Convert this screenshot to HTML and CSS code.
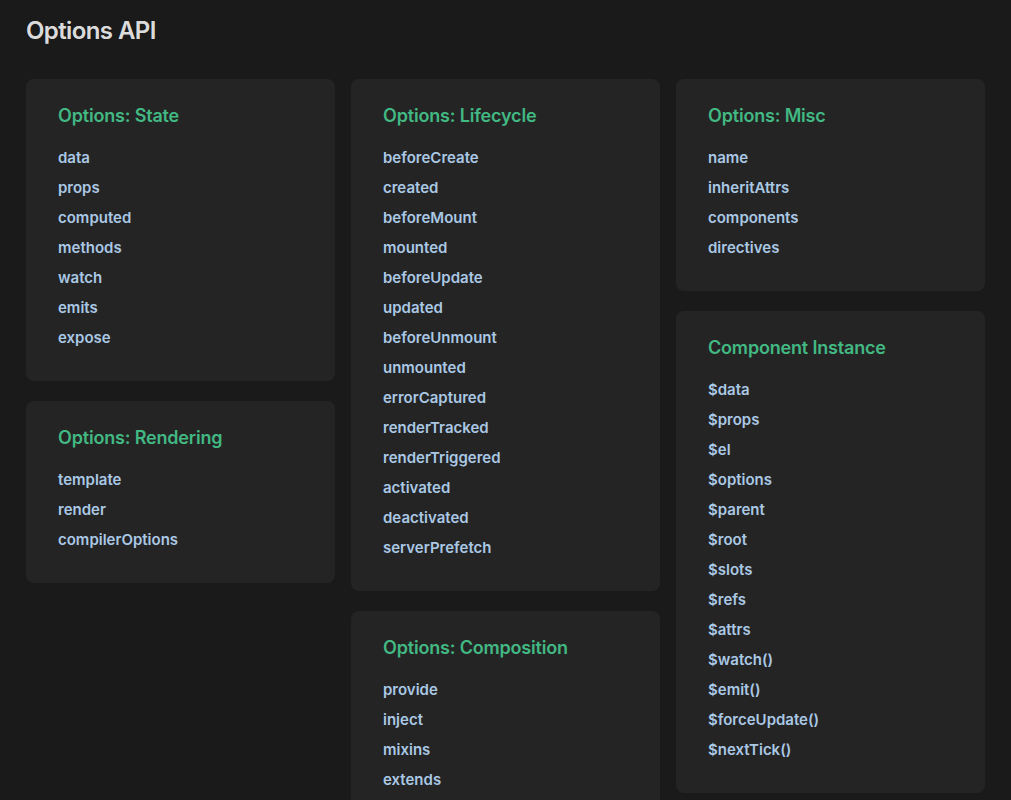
FILE: index.html
```html
<!DOCTYPE html>
<html lang="en">
<head>
<meta charset="utf-8">
<title>Options API</title>
<link rel="stylesheet" href="styles.css">
</head>
<body>
<section class="api-section">
  <h2 class="section-title">Options API</h2>
  <div class="api-groups">
    <div class="api-col">
      <div class="api-group">
        <h3>Options: State</h3>
        <ul>
          <li><a href="#">data</a></li>
          <li><a href="#">props</a></li>
          <li><a href="#">computed</a></li>
          <li><a href="#">methods</a></li>
          <li><a href="#">watch</a></li>
          <li><a href="#">emits</a></li>
          <li><a href="#">expose</a></li>
        </ul>
      </div>
      <div class="api-group">
        <h3>Options: Rendering</h3>
        <ul>
          <li><a href="#">template</a></li>
          <li><a href="#">render</a></li>
          <li><a href="#">compilerOptions</a></li>
        </ul>
      </div>
    </div>
    <div class="api-col">
      <div class="api-group">
        <h3>Options: Lifecycle</h3>
        <ul>
          <li><a href="#">beforeCreate</a></li>
          <li><a href="#">created</a></li>
          <li><a href="#">beforeMount</a></li>
          <li><a href="#">mounted</a></li>
          <li><a href="#">beforeUpdate</a></li>
          <li><a href="#">updated</a></li>
          <li><a href="#">beforeUnmount</a></li>
          <li><a href="#">unmounted</a></li>
          <li><a href="#">errorCaptured</a></li>
          <li><a href="#">renderTracked</a></li>
          <li><a href="#">renderTriggered</a></li>
          <li><a href="#">activated</a></li>
          <li><a href="#">deactivated</a></li>
          <li><a href="#">serverPrefetch</a></li>
        </ul>
      </div>
      <div class="api-group">
        <h3>Options: Composition</h3>
        <ul>
          <li><a href="#">provide</a></li>
          <li><a href="#">inject</a></li>
          <li><a href="#">mixins</a></li>
          <li><a href="#">extends</a></li>
        </ul>
      </div>
    </div>
    <div class="api-col">
      <div class="api-group">
        <h3>Options: Misc</h3>
        <ul>
          <li><a href="#">name</a></li>
          <li><a href="#">inheritAttrs</a></li>
          <li><a href="#">components</a></li>
          <li><a href="#">directives</a></li>
        </ul>
      </div>
      <div class="api-group">
        <h3>Component Instance</h3>
        <ul>
          <li><a href="#">$data</a></li>
          <li><a href="#">$props</a></li>
          <li><a href="#">$el</a></li>
          <li><a href="#">$options</a></li>
          <li><a href="#">$parent</a></li>
          <li><a href="#">$root</a></li>
          <li><a href="#">$slots</a></li>
          <li><a href="#">$refs</a></li>
          <li><a href="#">$attrs</a></li>
          <li><a href="#">$watch()</a></li>
          <li><a href="#">$emit()</a></li>
          <li><a href="#">$forceUpdate()</a></li>
          <li><a href="#">$nextTick()</a></li>
        </ul>
      </div>
    </div>
  </div>
</section>
</body>
</html>
```

FILE: styles.css
```css
html, body {
  margin: 0;
  padding: 0;
  background: #1a1a1a;
  font-family: Inter, "Noto Sans", "Liberation Sans", sans-serif;
  -webkit-font-smoothing: antialiased;
}

.api-section {
  padding: 15px 26px 0;
}

.section-title {
  margin: 0 0 32px;
  font-size: 24px;
  line-height: 32px;
  font-weight: 600;
  color: rgba(255, 255, 255, 0.87);
  letter-spacing: -0.025em;
}

.api-groups {
  display: grid;
  grid-template-columns: repeat(3, minmax(0, 1fr));
  column-gap: 16px;
  align-items: start;
}

.api-col {
  display: flex;
  flex-direction: column;
  gap: 20px;
}

.api-group {
  background: #242424;
  border-radius: 8px;
  padding: 28px 32px;
}

.api-group h3 {
  margin: 0 0 18px;
  font-size: 18px;
  line-height: 1;
  font-weight: 600;
  color: #42b883;
  letter-spacing: -0.01em;
}

.api-group ul {
  list-style: none;
  margin: 0;
  padding: 0;
}

.api-group li {
  font-size: 15px;
  line-height: 30px;
  font-weight: 600;
}

.api-group a {
  color: #aac8e4;
  text-decoration: none;
}
```
